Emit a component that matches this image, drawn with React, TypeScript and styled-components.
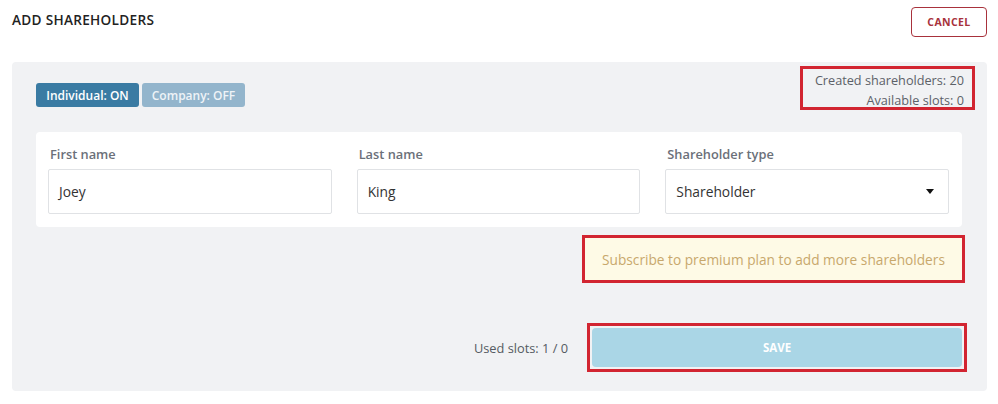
import styled, { createGlobalStyle } from "styled-components";

const GlobalStyle = createGlobalStyle`
  html, body {
    margin: 0;
    padding: 0;
    background: #ffffff;
    font-family: "Open Sans", "Liberation Sans", sans-serif;
  }
`;

const Page = styled.div`
  width: 998px;
  height: 404px;
  overflow: hidden;
  box-sizing: border-box;
  padding: 7px 11px 0 12px;
`;

const Header = styled.div`
  display: flex;
  justify-content: space-between;
  align-items: flex-start;
  height: 55px;
`;

const Title = styled.h1`
  margin: 3px 0 0;
  font-size: 13.6px;
  font-weight: 600;
  letter-spacing: 0.3px;
  color: #222;
`;

const CancelButton = styled.button`
  width: 76px;
  height: 30px;
  border: 1px solid #a8323c;
  border-radius: 4px;
  background: #fff;
  color: #a8323c;
  font-family: inherit;
  font-size: 10.5px;
  font-weight: 700;
  letter-spacing: 0.4px;
`;

const Panel = styled.section`
  background: #f1f2f4;
  border-radius: 4px;
  height: 329px;
  box-sizing: border-box;
  padding: 4px 12px 0 24px;
`;

const TopRow = styled.div`
  display: flex;
  justify-content: space-between;
  align-items: flex-start;
  margin-bottom: 22px;
`;

const Toggles = styled.div`
  display: flex;
  gap: 3px;
  margin-top: 17px;
`;

const Toggle = styled.button<{ $on?: boolean }>`
  width: 103px;
  height: 24px;
  border: none;
  border-radius: 3px;
  background: ${(p) => (p.$on ? "#3a7ba3" : "#93b5cc")};
  color: ${(p) => (p.$on ? "#ffffff" : "#eef3f7")};
  font-family: inherit;
  font-size: 12px;
  font-weight: 600;
  padding: 0;
`;

const Stats = styled.div`
  box-sizing: border-box;
  width: 175px;
  height: 44px;
  border: 3px solid #d22531;
  padding: 1px 8px 0 0;
  text-align: right;
  font-size: 12.7px;
  line-height: 20px;
  color: #5c6168;
`;

const Card = styled.div`
  background: #fff;
  border-radius: 4px;
  margin-right: 13px;
  padding: 13px 13px 13px 12px;
  display: grid;
  grid-template-columns: repeat(3, 1fr);
  gap: 25px;
`;

const Field = styled.label`
  display: flex;
  flex-direction: column;
  gap: 6px;
`;

const Label = styled.span`
  padding-left: 2px;
  font-size: 12.8px;
  font-weight: 600;
  color: #6b7079;
  line-height: 18px;
`;

const Input = styled.div`
  box-sizing: border-box;
  height: 45px;
  border: 1px solid #e0e2e5;
  border-radius: 2px;
  display: flex;
  align-items: center;
  justify-content: space-between;
  padding: 0 14px 0 10px;
  font-size: 13.8px;
  color: #333;
`;

const Caret = styled.span`
  width: 0;
  height: 0;
  border-left: 4px solid transparent;
  border-right: 4px solid transparent;
  border-top: 5px solid #111;
`;

const NoticeRow = styled.div`
  display: flex;
  justify-content: flex-end;
  margin: 11px 13px 0 0;
`;

const Notice = styled.div`
  width: 377px;
  height: 42px;
  box-sizing: border-box;
  background: #fefae6;
  box-shadow: 0 0 0 3px #d22531;
  display: flex;
  align-items: center;
  justify-content: center;
  font-size: 13.7px;
  color: #c8a86c;
`;

const FooterRow = styled.div`
  display: flex;
  justify-content: flex-end;
  align-items: center;
  gap: 19px;
  margin: 43px 8px 0 0;
`;

const UsedSlots = styled.span`
  font-size: 12.8px;
  color: #555b62;
`;

const Highlight = styled.div`
  border: 3px solid #d22531;
  padding: 2px;
  display: flex;
`;

const SaveButton = styled.button`
  width: 370px;
  height: 39px;
  border: none;
  border-radius: 4px;
  background: #aad6e6;
  color: #ffffff;
  font-family: inherit;
  font-size: 11.5px;
  font-weight: 700;
`;

const fields = [
  { label: "First name", value: "Joey" },
  { label: "Last name", value: "King" },
  { label: "Shareholder type", value: "Shareholder", select: true },
];

export default function App() {
  return (
    <>
      <GlobalStyle />
      <Page>
        <Header>
          <Title>ADD SHAREHOLDERS</Title>
          <CancelButton>CANCEL</CancelButton>
        </Header>
        <Panel>
          <TopRow>
            <Toggles>
              <Toggle $on>Individual: ON</Toggle>
              <Toggle>Company: OFF</Toggle>
            </Toggles>
            <Stats>
              <div>Created shareholders: 20</div>
              <div>Available slots: 0</div>
            </Stats>
          </TopRow>
          <Card>
            {fields.map((f) => (
              <Field key={f.label}>
                <Label>{f.label}</Label>
                <Input>
                  {f.value}
                  {f.select && <Caret />}
                </Input>
              </Field>
            ))}
          </Card>
          <NoticeRow>
            <Notice>Subscribe to premium plan to add more shareholders</Notice>
          </NoticeRow>
          <FooterRow>
            <UsedSlots>Used slots: 1 / 0</UsedSlots>
            <Highlight>
              <SaveButton>SAVE</SaveButton>
            </Highlight>
          </FooterRow>
        </Panel>
      </Page>
    </>
  );
}
